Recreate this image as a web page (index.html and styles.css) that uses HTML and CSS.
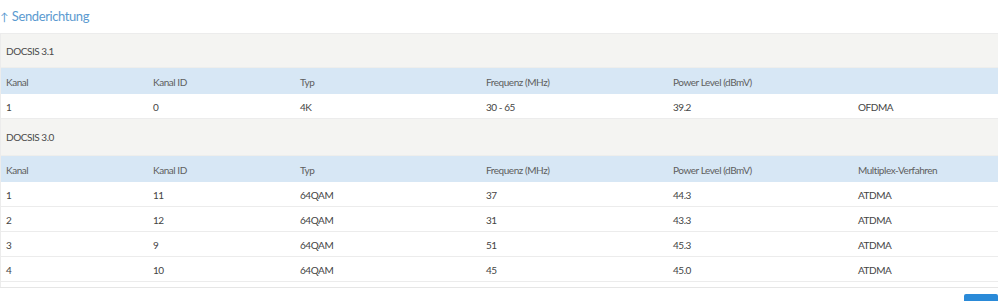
FILE: index.html
```html
<!DOCTYPE html>
<html lang="de">
<head>
<meta charset="utf-8">
<title>Senderichtung</title>
<link rel="stylesheet" href="styles.css">
</head>
<body>
<h2 class="title"><span class="arrow">↑</span><span class="label">Senderichtung</span></h2>
<div class="tablewrap">
<table class="chan">
  <colgroup>
    <col class="c1"><col class="c2"><col class="c3"><col class="c4"><col class="c5"><col class="c6">
  </colgroup>
  <tbody>
    <tr class="section first"><td colspan="6">DOCSIS 3.1</td></tr>
    <tr class="head"><td>Kanal</td><td>Kanal ID</td><td>Typ</td><td>Frequenz (MHz)</td><td>Power Level (dBmV)</td><td></td></tr>
    <tr class="row"><td>1</td><td>0</td><td>4K</td><td>30 - 65</td><td>39.2</td><td>OFDMA</td></tr>
    <tr class="section"><td colspan="6">DOCSIS 3.0</td></tr>
    <tr class="head"><td>Kanal</td><td>Kanal ID</td><td>Typ</td><td>Frequenz (MHz)</td><td>Power Level (dBmV)</td><td>Multiplex-Verfahren</td></tr>
    <tr class="row"><td>1</td><td>11</td><td>64QAM</td><td>37</td><td>44.3</td><td>ATDMA</td></tr>
    <tr class="row"><td>2</td><td>12</td><td>64QAM</td><td>31</td><td>43.3</td><td>ATDMA</td></tr>
    <tr class="row"><td>3</td><td>9</td><td>64QAM</td><td>51</td><td>45.3</td><td>ATDMA</td></tr>
    <tr class="row"><td>4</td><td>10</td><td>64QAM</td><td>45</td><td>45.0</td><td>ATDMA</td></tr>
  </tbody>
</table>
</div>
<div class="footer">
  <button class="btn" type="button"></button>
</div>
</body>
</html>
```

FILE: styles.css
```css
html, body {
  margin: 0;
  padding: 0;
  background: #ffffff;
  font-family: Lato, "Open Sans", sans-serif;
  color: #555;
  overflow: hidden;
}
.title {
  margin: 0;
  height: 33px;
  line-height: 32px;
  font-size: 13px;
  font-weight: 400;
  color: #5b9ad0;
  padding-left: 0;
  letter-spacing: -0.4px;
}
.arrow {
  font-size: 11px;
  margin-right: 4px;
}
.tablewrap {
  border-top: 1px solid #ececec;
  border-left: 1px solid #ececec;
  padding-bottom: 5px;
}
.chan {
  width: 1000px;
  border-collapse: collapse;
  table-layout: fixed;
  font-size: 10px;
  letter-spacing: -0.45px;
}
.c1 { width: 147px; }
.c2 { width: 147px; }
.c3 { width: 186px; }
.c4 { width: 187px; }
.c5 { width: 185px; }
.c6 { width: 148px; }
.chan td {
  padding: 0 0 0 5px;
  white-space: nowrap;
}
.section td {
  background: #f4f4f2;
  height: 36px;
  color: #4a4a4a;
  border-bottom: 1px solid #eeeeec;
}
.section.first td {
  height: 33px;
}
.head td {
  background: #d7e7f5;
  height: 24px;
  padding-top: 2px;
  color: #5e5e5e;
}
.row td {
  background: #fff;
  height: 22px;
  padding-top: 2px;
  border-bottom: 1px solid #ececec;
  color: #444;
}
.footer {
  border-top: 1px solid #e6e6e6;
  height: 20px;
  display: flex;
  justify-content: flex-end;
  padding-top: 6px;
}
.btn {
  width: 34px;
  height: 20px;
  border: none;
  background: #2a8ad8;
  border-radius: 2px 2px 0 0;
  margin-right: 0;
}
```
